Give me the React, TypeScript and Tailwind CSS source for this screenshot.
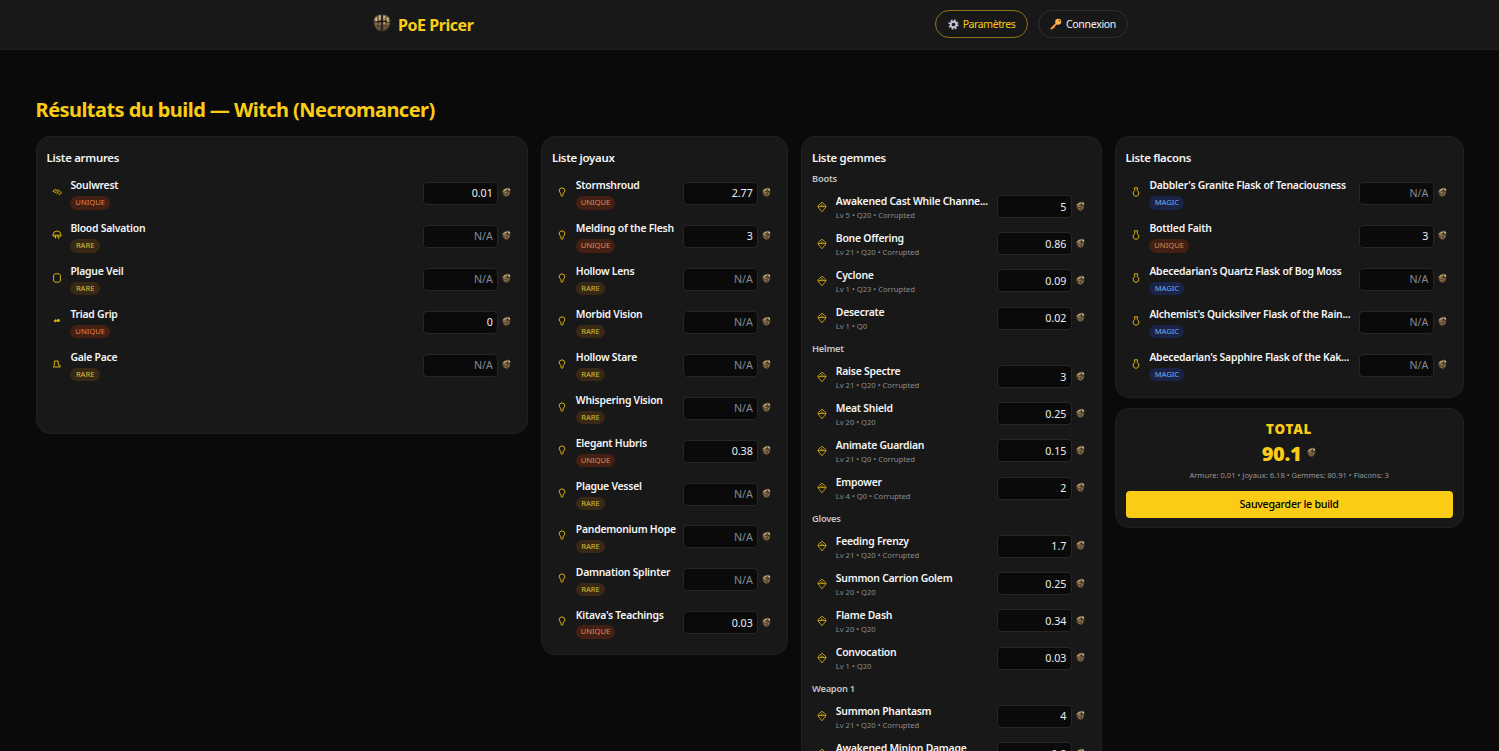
import React from "react";

type Rarity = "UNIQUE" | "RARE" | "MAGIC";
type IconName = "weapon" | "helmet" | "body" | "gloves" | "boots" | "jewel" | "gem" | "flask";
interface Item {
  name: string;
  icon: IconName;
  rarity?: Rarity;
  detail?: string;
  price?: string;
}

const badgeStyles: Record<Rarity, string> = {
  UNIQUE: "w-[39.5px] bg-[#431f14] text-[#e2894f]",
  RARE: "w-[29.5px] bg-[#3a2817] text-[#d3c234]",
  MAGIC: "w-[35px] bg-[#192448] text-[#76acec]",
};

const armours: Item[] = [
  { name: "Soulwrest", icon: "weapon", rarity: "UNIQUE", price: "0.01" },
  { name: "Blood Salvation", icon: "helmet", rarity: "RARE" },
  { name: "Plague Veil", icon: "body", rarity: "RARE" },
  { name: "Triad Grip", icon: "gloves", rarity: "UNIQUE", price: "0" },
  { name: "Gale Pace", icon: "boots", rarity: "RARE" },
];

const jewels: Item[] = [
  { name: "Stormshroud", icon: "jewel", rarity: "UNIQUE", price: "2.77" },
  { name: "Melding of the Flesh", icon: "jewel", rarity: "UNIQUE", price: "3" },
  { name: "Hollow Lens", icon: "jewel", rarity: "RARE" },
  { name: "Morbid Vision", icon: "jewel", rarity: "RARE" },
  { name: "Hollow Stare", icon: "jewel", rarity: "RARE" },
  { name: "Whispering Vision", icon: "jewel", rarity: "RARE" },
  { name: "Elegant Hubris", icon: "jewel", rarity: "UNIQUE", price: "0.38" },
  { name: "Plague Vessel", icon: "jewel", rarity: "RARE" },
  { name: "Pandemonium Hope", icon: "jewel", rarity: "RARE" },
  { name: "Damnation Splinter", icon: "jewel", rarity: "RARE" },
  { name: "Kitava's Teachings", icon: "jewel", rarity: "UNIQUE", price: "0.03" },
];

const gemGroups: { slot: string; gems: Item[] }[] = [
  {
    slot: "Boots",
    gems: [
      { name: "Awakened Cast While Channe...", icon: "gem", detail: "Lv 5 • Q20 • Corrupted", price: "5" },
      { name: "Bone Offering", icon: "gem", detail: "Lv 21 • Q20 • Corrupted", price: "0.86" },
      { name: "Cyclone", icon: "gem", detail: "Lv 1 • Q23 • Corrupted", price: "0.09" },
      { name: "Desecrate", icon: "gem", detail: "Lv 1 • Q0", price: "0.02" },
    ],
  },
  {
    slot: "Helmet",
    gems: [
      { name: "Raise Spectre", icon: "gem", detail: "Lv 21 • Q20 • Corrupted", price: "3" },
      { name: "Meat Shield", icon: "gem", detail: "Lv 20 • Q20", price: "0.25" },
      { name: "Animate Guardian", icon: "gem", detail: "Lv 21 • Q0 • Corrupted", price: "0.15" },
      { name: "Empower", icon: "gem", detail: "Lv 4 • Q0 • Corrupted", price: "2" },
    ],
  },
  {
    slot: "Gloves",
    gems: [
      { name: "Feeding Frenzy", icon: "gem", detail: "Lv 21 • Q20 • Corrupted", price: "1.7" },
      { name: "Summon Carrion Golem", icon: "gem", detail: "Lv 20 • Q20", price: "0.25" },
      { name: "Flame Dash", icon: "gem", detail: "Lv 20 • Q20", price: "0.34" },
      { name: "Convocation", icon: "gem", detail: "Lv 1 • Q20", price: "0.03" },
    ],
  },
  {
    slot: "Weapon 1",
    gems: [
      { name: "Summon Phantasm", icon: "gem", detail: "Lv 21 • Q20 • Corrupted", price: "4" },
      { name: "Awakened Minion Damage", icon: "gem", detail: "Lv 5 • Q20 • Corrupted", price: "0.8" },
    ],
  },
];

const flasks: Item[] = [
  { name: "Dabbler's Granite Flask of Tenaciousness", icon: "flask", rarity: "MAGIC" },
  { name: "Bottled Faith", icon: "flask", rarity: "UNIQUE", price: "3" },
  { name: "Abecedarian's Quartz Flask of Bog Moss", icon: "flask", rarity: "MAGIC" },
  { name: "Alchemist's Quicksilver Flask of the Rain...", icon: "flask", rarity: "MAGIC" },
  { name: "Abecedarian's Sapphire Flask of the Kak...", icon: "flask", rarity: "MAGIC" },
];

const iconShapes: Record<IconName, React.ReactNode> = {
  weapon: <path d="M2.6 5.4 1 4.2 2.6 2.6 4.4 2.9 6.4 6.6 7.8 7.6 9.3 6 8.2 4.6 M2.8 4.3 4.6 6.6 M5.4 3 7.2 3.4 8.3 4.8" />,
  helmet: (
    <path d="M1 6.2V4.8Q1.4 1.1 5 .9 8.6 1.1 9 4.8V6.2L7.7 6.4M1 6.2 2.8 6.4M1.5 5.2H8.5M3.5 5.5V8.5M5.2 5.5V7.5M6.7 5.5V9" />
  ),
  body: <path d="M2.8.8H7.2L8.4 2.1V7.9L7.2 9.2H2.8L1.6 7.9V2.1Z" />,
  gloves: <path d="M2.2 4.8 3.6 3.7 4.8 4.5 6 3.5 7.4 3.7V5.2L6 5.5 4.6 4.9 3.8 5.8 2.5 5.6Z" fill="#d9b010" />,
  boots: <path d="M2.4 2H6.2V6L8.2 6.5V8H1.3V7.2L2.4 6.4Z" />,
  jewel: <path d="M5 .8Q2.1 1.1 2.1 4L3.9 6.8V8.5L5 9.3 6.1 8.5V6.8L7.9 4Q7.9 1.1 5 .8Z" />,
  gem: <path d="M5 .2 1.1 3.6V5L5 9.8 8.9 5V3.6ZM1 4.6H9M3.2 4.4 5 2.6 6.8 4.4" strokeWidth=".85" />,
  flask: <path d="M3.4.8H6.6V2L6 3.2Q8.2 4.8 7.9 6.9 7.2 9.3 5 9.3 2.8 9.3 2.1 6.9 1.8 4.8 4 3.2L3.4 2Z" />,
};

function ItemIcon({ name }: { name: IconName }) {
  return (
    <svg viewBox="0 0 10 10" className="size-[10px] shrink-0 overflow-visible" fill="none" stroke="#d9b010" strokeWidth="1" strokeLinejoin="round">
      {iconShapes[name]}
    </svg>
  );
}

function Orb() {
  return (
    <svg viewBox="0 0 9 11" className="h-[11px] w-[9px] shrink-0">
      <path d="M.4 3.4 2.6 1.4 6.4.6 8.2 1.8 8.4 5.6 7 8.8 4.8 10 2.2 9 .6 6.8Z" fill="#5d4c34" />
      <path d="M.8 4 3 2 6 1.2 4.6 3 1.8 4.8Z" fill="#bfa273" />
      <path d="M6.2 1.4 7.9 2.1 7.8 4 6.2 3.2Z" fill="#dcc499" />
      <path d="M1.4 6 3.8 4.6 5.4 4.8 4.2 6Z" fill="#a3865a" />
      <path d="M5.6 6.8 7.4 5.4 6.6 8.2Z" fill="#9c8157" />
      <path d="M2 7.2 4 7 4.6 9 2.8 8.5Z" fill="#8a7049" />
      <path d="M3.4 4.2 6.2 3.6 7.9 4.6" stroke="#2a2118" strokeWidth=".6" fill="none" />
    </svg>
  );
}

function Logo() {
  return (
    <svg viewBox="0 0 18 18" className="h-[18px] w-[18px]">
      <path d="M8.4.6Q4 0 1.3 3.2-.1 8 1.3 12L4.5 16.2 8.4 17.4ZM9.6.6Q14 0 16.7 3.2 18.1 8 16.7 12L13.5 16.2 9.6 17.4Z" fill="#4d402f" />
      <path d="M1.8 4.1 4.4 2 4.7 5.9 1.5 7ZM5.5 1.5 8 1.2 7.8 6.2 5.7 6.4ZM10.1 1.2 12.4 1.6V6.2L10.2 6.5ZM13.3 2.2 15.9 4.2 16.5 7.2 13.3 6.4Z" fill="#b39566" />
      <path d="M1.7 8.9 4.6 8.5 4.3 11 2.4 11.5ZM5.6 8.4 8 8.6 7.7 11 5.7 11.2ZM10.1 8.6 12.5 8.4 12.3 11.3 10.2 11ZM13.4 8.6 16.3 9 15.4 11.4 13.4 11.2Z" fill="#8c7350" />
      <path d="M5.9 2.3 7.5 2M10.4 3.1 12.1 2.5M13.9 3.9 15.3 5M6 4.9 7.5 4.4M2.3 5.5 3.9 4.5M2.6 7 4.3 6.5M10.4 9.2 12 8.8M13.9 7.1 15.6 7.4" stroke="#ecdab2" strokeWidth="1" />
      <path d="M3.6 12.4 4.2 14.6M6.1 12.5 6.4 15.5M11.4 12.3 11.2 15.5M14.1 12.3 13.5 14.4" stroke="#8a7049" strokeWidth=".9" />
      <path d="M3.5 7.9 8.5 7.4 14.5 7.8" stroke="#15120f" strokeWidth=".8" />
    </svg>
  );
}

function Gear() {
  return (
    <svg viewBox="0 0 12 12" className="size-[11px]">
      <circle cx="6" cy="6" r="4.5" fill="none" stroke="#c9bfdc" strokeWidth="2.2" strokeDasharray="1.9 1.634" />
      <circle cx="6" cy="6" r="3" fill="none" stroke="#c9bfdc" strokeWidth="2" />
    </svg>
  );
}

function Key() {
  return (
    <svg viewBox="0 0 12 12" className="size-[12px]">
      <path d="M6.4 5.6 1.4 10.6" stroke="#ff9c3d" strokeWidth="1.9" strokeLinecap="round" />
      <path d="M3.2 9 4.4 10.2" stroke="#ff9c3d" strokeWidth="1.1" />
      <circle cx="8.2" cy="3.8" r="3" fill="#ffb84a" />
      <circle cx="9.3" cy="2.7" r=".7" fill="#4a3520" />
    </svg>
  );
}

function Row({ item }: { item: Item }) {
  const isGem = item.detail !== undefined;
  return (
    <div className={`flex shrink-0 items-center pr-[6px] pl-[5.3px] ${isGem ? "h-[37.2px]" : "h-[42.94px]"}`}>
      <div className={isGem ? "" : "pb-[3px]"}>
        <ItemIcon name={item.icon} />
      </div>
      <div className={`ml-[8.5px] min-w-0 flex-1 whitespace-nowrap ${isGem ? "pt-[1.6px]" : "pt-[1px]"}`}>
        <div className="h-[15px] text-[10.4px] leading-[15px] font-semibold tracking-[-0.24px] text-[#f5f5f5]">{item.name}</div>
        {item.rarity && (
          <div className={`mt-[2.8px] flex h-[13.5px] items-center justify-center rounded-full text-[7.6px] leading-none ${badgeStyles[item.rarity]}`}>
            {item.rarity}
          </div>
        )}
        {isGem && <div className="h-[12px] text-[7.6px] leading-[12px] text-[#8d8d8d]">{item.detail}</div>}
      </div>
      <div className={`flex h-[23px] w-[75px] shrink-0 items-center justify-end rounded-[4px] border border-[#262626] bg-[#0a0a0a] pr-[4.5px] text-[10.67px] ${item.price ? "text-[#f0f0f0]" : "text-[#858b94]"}`}>
        {item.price ?? "N/A"}
      </div>
      <div className="ml-[3.7px] flex pb-[1px]">
        <Orb />
      </div>
    </div>
  );
}

function Card({ title, className, children }: { title: string; className: string; children: React.ReactNode }) {
  return (
    <section className={`rounded-[14px] border border-[#202020] bg-[#181818] px-[10px] ${className}`}>
      <h2 className="mt-[12px] h-[17px] text-[11.4px] leading-[17px] font-semibold tracking-[-0.28px] text-[#f5f5f5]">{title}</h2>
      {children}
    </section>
  );
}

export default function App() {
  return (
    <div className="h-screen overflow-hidden bg-[#0a0a0a] font-['Noto_Sans','Open_Sans',sans-serif] text-[#f5f5f5]">
      <header className="h-[49.5px] border-b border-[#202020] bg-[#181818]">
        <div className="mx-auto flex h-full w-[757px] items-center justify-between">
          <div className="flex items-center gap-[7px] pl-[2px]">
            <div className="pb-[2px]">
              <Logo />
            </div>
            <span className="pt-px text-[16px] font-bold tracking-[-0.45px] text-[#facc15]">PoE Pricer</span>
          </div>
          <nav className="flex gap-[10px] text-[10.5px] tracking-[-0.3px]">
            <button className="flex h-[28px] w-[93px] items-center justify-center gap-1 rounded-full border border-[#8c7412] text-[#facc15]">
              <Gear />
              <span className="pt-px tracking-[-0.42px]">Paramètres</span>
            </button>
            <button className="flex h-[28px] w-[90px] items-center justify-center gap-1 rounded-full border border-[#303030]">
              <Key />
              <span className="pt-px">Connexion</span>
            </button>
          </nav>
        </div>
      </header>

      <main className="px-[35.6px] pt-[46.5px]">
        <h1 className="h-[28px] text-[20px] leading-[28px] font-bold tracking-[-0.56px] whitespace-nowrap text-[#facc15]">
          Résultats du build — Witch (Necromancer)
        </h1>
        <div className="mt-[12px] grid grid-cols-[492.4px_247px_300.6px_349px] items-start gap-[13px]">
          <Card title="Liste armures" className="h-[298px]">
            <div className="mt-[6px] flex flex-col">
              {armours.map((item) => (
                <Row key={item.name} item={item} />
              ))}
            </div>
          </Card>

          <Card title="Liste joyaux" className="h-[519px]">
            <div className="mt-[6px] flex flex-col">
              {jewels.map((item) => (
                <Row key={item.name} item={item} />
              ))}
            </div>
          </Card>

          <Card title="Liste gemmes" className="h-[700px]">
            <div className="mt-[4px] flex flex-col gap-[3.2px]">
              {gemGroups.map((group) => (
                <div key={group.slot} className="flex flex-col">
                  <h3 className="h-[18px] text-[9.33px] leading-[17px] font-semibold tracking-[-0.25px] text-[#c4c4c4]">{group.slot}</h3>
                  {group.gems.map((gem) => (
                    <Row key={gem.name} item={gem} />
                  ))}
                </div>
              ))}
            </div>
          </Card>

          <div className="flex flex-col gap-[10px]">
            <Card title="Liste flacons" className="h-[261.5px]">
              <div className="mt-[6px] flex flex-col">
                {flasks.map((item) => (
                  <Row key={item.name} item={item} />
                ))}
              </div>
            </Card>

            <section className="flex h-[120.5px] flex-col items-center rounded-[14px] border border-[#202020] bg-[#181818] px-[10px] pt-[11px]">
              <div className="h-[19px] text-[13.3px] leading-[19px] font-black tracking-[0.8px] text-[#facc15]">TOTAL</div>
              <div className="flex h-[29px] items-center gap-[6px]">
                <span className="text-[20px] leading-[29px] font-black tracking-[-0.3px] text-[#facc15]">90.1</span>
                <div className="pb-[2px]">
                  <Orb />
                </div>
              </div>
              <div className="mt-[1px] h-[13px] text-[7.6px] leading-[13px] text-[#969696]">
                Armure: 0.01 • Joyaux: 6.18 • Gemmes: 80.91 • Flacons: 3
              </div>
              <button className="mt-[9px] h-[27px] w-full rounded-[4px] bg-[#facc15] text-[10.67px] font-medium tracking-[-0.28px] text-black">
                Sauvegarder le build
              </button>
            </section>
          </div>
        </div>
      </main>
    </div>
  );
}
